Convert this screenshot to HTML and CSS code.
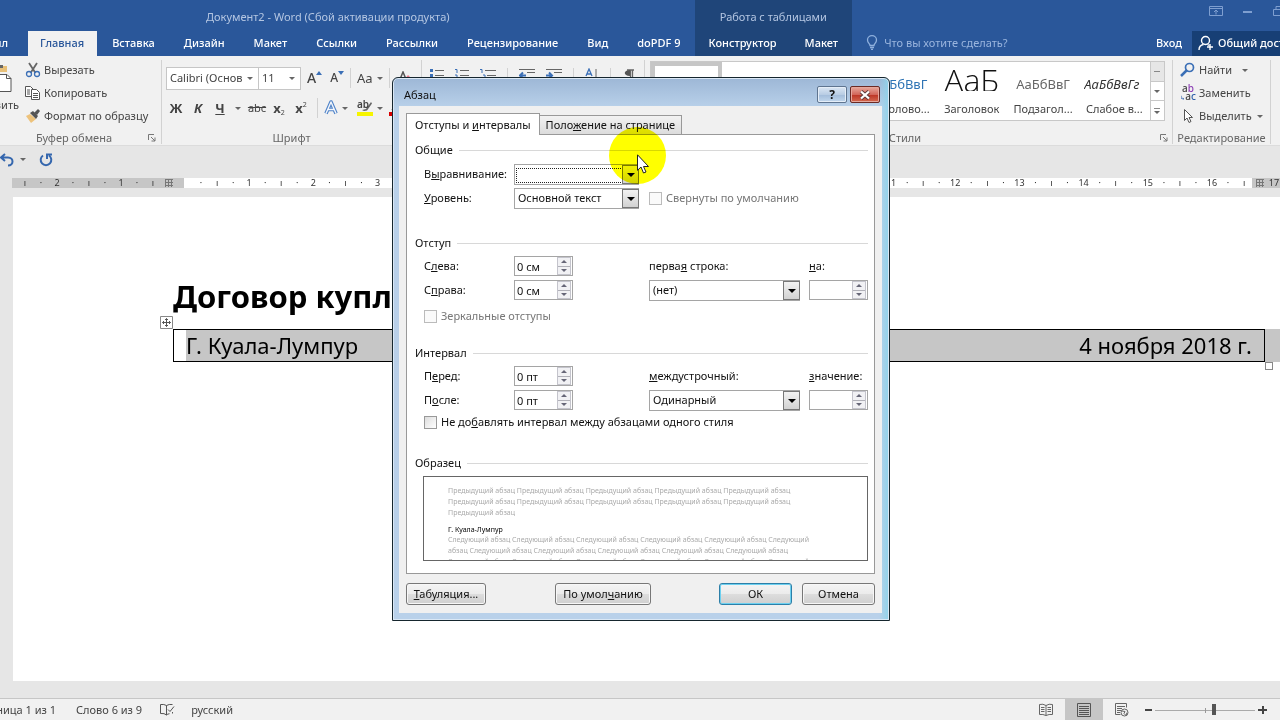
FILE: index.html
```html
<!DOCTYPE html>
<html lang="ru">
<head>
<meta charset="utf-8">
<title>Документ2 - Word</title>
<link rel="stylesheet" href="styles.css">
</head>
<body>
<div class="app">
  <header class="top">
    <div class="titlebar">
      <div class="doc-title">Документ2 - Word (Сбой активации продукта)</div>
      <div class="win-icons">
        <svg width="14" height="12" viewBox="0 0 14 12" fill="none" stroke="#7f9fd0"><path d="M.5 1.5h13v9H.5zM.5 3.5h13M7 9.500V5M5 7l2-2 2 2"/></svg>
        <svg width="10" height="12" viewBox="0 0 10 12" stroke="#7f9fd0" stroke-width="2"><path d="M0 7h9"/></svg>
        <svg width="10" height="12" viewBox="0 0 10 12" fill="none" stroke="#7f9fd0"><path d="M.5 4.500h7v6h-7zM3 4V1.500h7V8H8"/></svg>
      </div>
    </div>
    <nav class="tabs">
      <a class="tab file" href="#">Файл</a>
      <a class="tab active" href="#">Главная</a>
      <a class="tab" href="#">Вставка</a>
      <a class="tab" href="#">Дизайн</a>
      <a class="tab" href="#">Макет</a>
      <a class="tab" href="#">Ссылки</a>
      <a class="tab" href="#">Рассылки</a>
      <a class="tab" href="#">Рецензирование</a>
      <a class="tab" href="#">Вид</a>
      <a class="tab" href="#">doPDF 9</a>
      <div class="context">
        <span class="context-title">Работа с таблицами</span>
        <div class="context-tabs"><a class="tab" href="#">Конструктор</a><a class="tab" href="#">Макет</a></div>
      </div>
      <div class="tell">
        <svg width="12" height="15" viewBox="0 0 12 15" fill="none" stroke="#8fb0dd" stroke-width="1.300"><path d="M4 10.500C4 8.500 1.500 8 1.500 5a4.500 4.300 0 0 1 9 0c0 3-2.500 3.500-2.500 5.500zM4 12.500h4M5 14.300h2"/></svg>
        <span>Что вы хотите сделать?</span>
      </div>
      <a class="tab login" href="#">Вход</a>
      <a class="share" href="#">
        <svg width="16" height="16" viewBox="0 0 16 16" fill="none" stroke="#fff" stroke-width="1.400"><circle cx="7.500" cy="5.500" r="4"/><path d="M1 15c0-3.500 2-5 4.500-5.500M9.500 9.500l1.500 1M12 9v6M9 12h6"/></svg>
        <span>Общий доступ</span>
      </a>
    </nav>
  </header>

  <section class="ribbon">
    <div class="group clipboard">
      <div class="group-body">
        <div class="paste">
          <svg width="12" height="29" viewBox="0 0 12 29"><path d="M0 2h7v6H0z" fill="#e8c078"/><path d="M0 1h3v3H0z" fill="#666"/><path d="M-4 10.500H7l4 4v13H-4z" fill="#fff" stroke="#555"/><path d="M6.500 10.500v4H11" fill="none" stroke="#555"/></svg>
          <span>Вставить</span>
        </div>
        <div class="commands">
          <button class="cmd"><svg width="16" height="16" viewBox="0 0 16 16" fill="none"><path d="M4 1l6.500 10M12 1L5.500 11" stroke="#666" stroke-width="1.800"/><circle cx="4" cy="12" r="2.500" stroke="#3b6fb6" stroke-width="1.300"/><circle cx="12" cy="12" r="2.500" stroke="#3b6fb6" stroke-width="1.300"/></svg>Вырезать</button>
          <button class="cmd"><svg width="16" height="16" viewBox="0 0 16 16" fill="#fff" stroke="#555"><path d="M.5 1.500h5l3 3v7h-8z"/><path d="M2 5h3M2 7h3M2 9h3"/><path d="M6.500 4.500h5l3 3v7h-8z"/><path d="M8 8.500h5M8 10.500h5M8 12.500h5"/></svg>Копировать</button>
          <button class="cmd"><svg width="16" height="16" viewBox="0 0 16 16"><path d="M1 8l4-2 6 5-5 4z" fill="#edc27b"/><path d="M5 5l3-2 5 5-2 3z" fill="#555"/><path d="M9 5l4-4 2 2-3 4z" fill="#555"/></svg>Формат по образцу</button>
        </div>
      </div>
      <div class="group-name"><span>Буфер обмена</span><svg width="8" height="8" viewBox="0 0 8 8" fill="none" stroke="#777"><path d="M.5 6V.5H6M3 3l4 4M7 3.500V7H3.500"/></svg></div>
    </div>

    <div class="group font">
      <div class="group-body stack">
        <div class="line">
          <div class="combo name"><input type="text" value="Calibri (Основ" aria-label="Шрифт"><i class="caret"></i></div><div class="combo size"><input type="text" value="11" aria-label="Размер"><i class="caret"></i></div>
          <button class="tool grow"><b>A</b><svg width="6" height="4" viewBox="0 0 6 4"><path d="M0 4l3-4 3 4z" fill="#3b6fb6"/></svg></button>
          <button class="tool shrink"><b>A</b><svg width="6" height="4" viewBox="0 0 6 4"><path d="M0 0l3 4 3-4z" fill="#3b6fb6"/></svg></button>
          <i class="sep"></i>
          <button class="tool case">Aa<i class="caret"></i></button>
          <i class="sep"></i>
          <button class="tool" aria-label="Очистить формат"><svg width="16" height="14" viewBox="0 0 16 14"><path d="M2 13L7 1l5 12M4 8h6" fill="none" stroke="#555" stroke-width="1.500"/><path d="M8 9l4-5 4 4-4 5z" fill="#e77b8c"/></svg></button>
        </div>
        <div class="line second">
          <button class="tool glyph"><b>Ж</b></button>
          <button class="tool glyph"><b><em>К</em></b></button>
          <button class="tool glyph"><b><u>Ч</u></b></button>
          <i class="caret"></i>
          <button class="tool strike"><s>abc</s></button>
          <button class="tool glyph"><b>x</b><sub>2</sub></button>
          <button class="tool glyph"><b>x</b><sup>2</sup></button>
          <i class="sep"></i>
          <button class="tool" aria-label="Эффекты"><svg width="14" height="16" viewBox="0 0 14 16" fill="none" stroke-linejoin="round"><path d="M2 13.500L7 2l5 11.500M4 9.500h6" stroke="#4f83c8" stroke-width="3.600"/><path d="M2 13.500L7 2l5 11.500M4 9.500h6" stroke="#f3f6fb" stroke-width="1.400"/></svg></button>
          <i class="caret"></i>
          <button class="tool marker"><span>ab</span><svg width="16" height="16" viewBox="0 0 16 16"><path d="M14 2l-5 7-4 1 2 1 3-.5 5-7z" fill="#666"/><path d="M0 12h16v4H0z" fill="#f6f500"/></svg></button>
          <i class="caret"></i>
          <button class="tool ink" aria-label="Цвет текста"><svg width="16" height="16" viewBox="0 0 16 16"><path d="M3 10L8 0l5 10" fill="none" stroke="#555"/><path d="M0 12h16v4H0z" fill="#d80000"/></svg></button>
        </div>
      </div>
      <div class="group-name"><span>Шрифт</span></div>
    </div>

    <div class="group para">
      <div class="group-body">
        <svg width="14" height="14" viewBox="0 0 14 14"><path d="M5 2.500h9M5 7.500h9" stroke="#666"/><path d="M0 1h3v3H0zM0 6h3v3H0z" fill="#3b6fb6"/></svg>
        <svg width="14" height="14" viewBox="0 0 14 14"><path d="M5 2.500h9M5 7.500h9" stroke="#666"/><path d="M0 1.500h2V5M0 7h2v3" fill="none" stroke="#3b6fb6"/></svg>
        <svg class="wide" width="16" height="14" viewBox="0 0 16 14"><path d="M5 2.500h11M7 7.500h9" stroke="#666"/><path d="M0 1.500h2V5M3 7h2v3" fill="none" stroke="#3b6fb6"/></svg>
        <i class="sep"></i>
        <svg width="16" height="14" viewBox="0 0 16 14"><path d="M0 1.500h16M8 4.500h8M0 10.500h16" stroke="#666"/><path d="M7 7.500H1M4 4.500l-3 3 3 3" fill="none" stroke="#3b6fb6" stroke-width="2"/></svg>
        <svg width="16" height="14" viewBox="0 0 16 14"><path d="M0 1.500h16M8 4.500h8M0 10.500h16" stroke="#666"/><path d="M0 7.500h6M3 4.500l3 3-3 3" fill="none" stroke="#3b6fb6" stroke-width="2"/></svg>
        <i class="sep"></i>
        <svg width="14" height="14" viewBox="0 0 14 14" fill="none"><path d="M1 8l3-7 3 7M2 6h4" stroke="#3b6fb6" stroke-width="1.300"/><path d="M11 1v12" stroke="#666"/></svg>
        <i class="sep"></i>
        <svg width="14" height="14" viewBox="0 0 14 14"><path d="M5 2h7M8.500 2v11M10.500 2v11" stroke="#666" stroke-width="1.300"/><path d="M8 2v6C1 8 1 2 8 2z" fill="#555"/></svg>
      </div>
    </div>

    <div class="group styles">
      <div class="group-body">
        <div class="gallery">
          <button class="style selected"></button>
          <button class="style"></button>
          <button class="style"></button>
          <button class="style"><span class="sample blue">АаБбВвГ</span><span>Заголово...</span></button>
          <button class="style"><span class="sample huge">АаБ</span><span>Заголовок</span></button>
          <button class="style"><span class="sample gray">АаБбВвГ</span><span>Подзагол...</span></button>
          <button class="style"><span class="sample slant">АаБбВвГг</span><span>Слабое в...</span></button>
          <div class="gallery-scroll">
            <button class="off" aria-label="Вверх"><i class="dash"></i></button>
            <button aria-label="Вниз"><i class="caret"></i></button>
            <button aria-label="Все стили"><i class="dash"></i><i class="caret"></i></button>
          </div>
        </div>
      </div>
      <div class="group-name"><span>Стили</span><svg width="8" height="8" viewBox="0 0 8 8" fill="none" stroke="#777"><path d="M.5 6V.5H6M3 3l4 4M7 3.500V7H3.500"/></svg></div>
    </div>

    <div class="group editing">
      <div class="group-body">
        <div class="commands">
          <button class="cmd"><svg width="16" height="16" viewBox="0 0 16 16" fill="none" stroke="#3b6fb6"><circle cx="9.500" cy="5.500" r="4" stroke-width="1.700"/><path d="M6.500 8.500L1 14" stroke-width="2.500"/></svg>Найти<i class="caret far"></i></button>
          <button class="cmd"><span class="swap"><span>a<strong>b</strong></span><span><small>↳</small>a<em>c</em></span></span>Заменить</button>
          <button class="cmd"><svg width="16" height="16" viewBox="0 0 16 16" fill="#fff" stroke="#555"><path d="M4.500 1.500v11l2.500-2.500 2 4.500 2-1-2-4h3.500z"/></svg>Выделить<i class="caret"></i></button>
        </div>
      </div>
      <div class="group-name"><span>Редактирование</span></div>
    </div>
  </section>

  <div class="quick">
    <svg width="14" height="14" viewBox="0 0 14 14" fill="none" stroke="#3567ae" stroke-width="2"><path d="M5 1L1 4.500 5 8M1 4.500h7c6 0 6 8 0 8"/></svg>
    <i class="caret"></i>
    <svg class="redo" width="14" height="14" viewBox="0 0 14 14" fill="none" stroke="#3567ae" stroke-width="2"><path d="M4 2.500a5.300 5.300 0 1 0 6 0M8 6V1.500h5"/></svg>
  </div>

  <div class="ruler">
    <div class="ruler-part left"><i>ı</i><i>·</i><i>2</i><i>·</i><i>ı</i><i>·</i><i>1</i><i>·</i><i>ı</i><i class="grid-mark"></i></div>
    <div class="ruler-part mid"><i>·</i><i>ı</i><i>·</i><i>1</i><i>·</i><i>ı</i><i>·</i><i>2</i><i>·</i><i>ı</i><i>·</i><i>3</i><i>·</i><i>ı</i><i>·</i><i>4</i><i>·</i><i>ı</i><i>·</i><i>5</i><i>·</i><i>ı</i><i>·</i><i>6</i><i>·</i><i>ı</i><i>·</i><i>7</i><i>·</i><i>ı</i><i>·</i><i>8</i><i>·</i><i>ı</i><i>·</i><i>9</i><i>·</i><i>ı</i><i>·</i><i>10</i><i>·</i><i>ı</i><i>·</i><i>11</i><i>·</i><i>ı</i><i>·</i><i>12</i><i>·</i><i>ı</i><i>·</i><i>13</i><i>·</i><i>ı</i><i>·</i><i>14</i><i>·</i><i>ı</i><i>·</i><i>15</i><i>·</i><i>ı</i><i>·</i><i>16</i><i>·</i><i>ı</i></div>
    <div class="ruler-part right"><i class="grid-mark"></i><i>17</i></div>
  </div>

  <main class="page">
    <h1>Договор купли-продажи</h1>
    <div class="table-wrap">
      <svg class="move" width="13" height="13" viewBox="0 0 13 13" fill="#fff" stroke="#888"><path d="M.5.5h12v12H.5z"/><path d="M6.500 2.500v8M2.500 6.500h8M5 4l1.500-1.500L8 4M5 9l1.500 1.500L8 9M4 5L2.500 6.500 4 8M9 5l1.500 1.500L9 8" fill="none" stroke="#555"/></svg>
      <table>
        <tr><td class="city"><div>Г. Куала-Лумпур</div></td><td class="date">4 ноября 2018 г.</td></tr>
      </table>
      <div class="row-end"></div>
      <i class="resize"></i>
    </div>
  </main>

  <footer class="status">
    <span class="pages">Страница 1 из 1</span>
    <span class="words">Слово 6 из 9</span>
    <svg width="15" height="14" viewBox="0 0 15 14" fill="none" stroke="#555"><path d="M6.500 2.500Q4 1 .5 1.500v9q4-.5 6 1.500V2.500Q9 1 12.500 1.500M6.500 12q1-1 3-1.300M12.500 9v1.500M8 6.500l2 2 4-5" /></svg>
    <span class="lang">русский</span>
    <div class="views">
      <button aria-label="Режим чтения"><svg width="14" height="14" viewBox="0 0 14 14" fill="none" stroke="#666"><path d="M7 2.500Q4 .5.500 1.500v10q3.500-.5 6.500 1 3-1.500 6.500-1v-10Q10 .5 7 2.500v10M2 4.500h3.500M2 6.500h3.500M2 8.500h3.500M8.500 4.500H12M8.500 6.500H12M8.500 8.500H12"/></svg></button>
      <button class="on" aria-label="Разметка страницы"><svg width="14" height="14" viewBox="0 0 14 14" fill="none" stroke="#555"><path d="M.5.500h13v13H.5zM2 3.500h10M2 5.500h10M2 7.500h10M2 9.500h10M2 11.500h10"/></svg></button>
      <button aria-label="Веб-документ"><svg width="14" height="14" viewBox="0 0 14 14" fill="none" stroke="#666"><path d="M5.500 11.500h-5v-11h11v4M2 3.500h8M2 5.500h5M2 7.500h4M2 9.500h3"/><circle cx="9.500" cy="9.500" r="3.500"/><path d="M7 8l3 .5-1 2 2 2 1-3"/></svg></button>
    </div>
    <div class="zoom">
      <button aria-label="Уменьшить"><svg width="7" height="9" viewBox="0 0 7 9"><path d="M0 4h7v2H0z" fill="#444"/></svg></button>
      <input type="range" min="0" max="100" value="59" aria-label="Масштаб">
      <button aria-label="Увеличить"><svg width="9" height="9" viewBox="0 0 9 9"><path d="M0 4h9v2H0zM4 1h2v8H4z" fill="#444"/></svg></button>
    </div>
  </footer>
</div>

<div class="dialog" role="dialog" aria-labelledby="dlg-title">
  <div class="dlg-title"><span id="dlg-title">Абзац</span>
    <div class="dlg-ctl">
      <button class="help" aria-label="Справка">?</button>
      <button class="close" aria-label="Закрыть"><svg width="12" height="10" viewBox="0 0 12 10"><path d="M2 1.500l8 7M10 1.500l-8 7" stroke="#5a3a3a" stroke-width="4"/><path d="M2 1.500l8 7M10 1.500l-8 7" stroke="#fff" stroke-width="2.300"/></svg></button>
    </div>
  </div>
  <form class="dlg-body">
    <div class="dlg-tabs"><button type="button" class="dlg-tab on">Отступы и <u>и</u>нтервалы</button><button type="button" class="dlg-tab">Поло<u>ж</u>ение на странице</button></div>
    <div class="panel">
      <section class="general">
        <h2>Общие</h2>
        <div class="fields">
          <label for="align">В<u>ы</u>равнивание:</label>
          <div class="drop short focus"><select id="align"><option></option></select><i></i></div>
          <span></span><span></span>
          <label for="level"><u>У</u>ровень:</label>
          <div class="drop short"><select id="level"><option>Основной текст</option></select><i></i></div>
          <label class="check off span2"><input type="checkbox" disabled>Свернуты по умолчанию</label>
        </div>
      </section>
      <section class="indent">
        <h2>Отступ</h2>
        <div class="fields">
          <label for="left">С<u>л</u>ева:</label>
          <div class="spin"><input id="left" type="text" value="0 см"><i></i></div>
          <label for="first">перва<u>я</u> строка:</label>
          <label for="by"><u>н</u>а:</label>
          <label for="right">С<u>п</u>рава:</label>
          <div class="spin"><input id="right" type="text" value="0 см"><i></i></div>
          <div class="drop long"><select id="first"><option>(нет)</option></select><i></i></div>
          <div class="spin"><input id="by" type="text" value=""><i></i></div>
          <label class="check off span4 low"><input type="checkbox" disabled>Зеркальные отступы</label>
        </div>
      </section>
      <section class="spacing">
        <h2>Интервал</h2>
        <div class="fields">
          <label for="before">П<u>е</u>ред:</label>
          <div class="spin"><input id="before" type="text" value="0 пт"><i></i></div>
          <label for="line"><u>м</u>еждустрочный:</label>
          <label for="val"><u>з</u>начение:</label>
          <label for="after">П<u>о</u>сле:</label>
          <div class="spin"><input id="after" type="text" value="0 пт"><i></i></div>
          <div class="drop long"><select id="line"><option>Одинарный</option></select><i></i></div>
          <div class="spin"><input id="val" type="text" value=""><i></i></div>
          <label class="check span4 snug"><input type="checkbox"><span>Не до<u>б</u>авлять интервал между абзацами одного стиля</span></label>
        </div>
      </section>
      <section>
        <h2>Образец</h2>
        <div class="preview">
          <p>Предыдущий абзац Предыдущий абзац Предыдущий абзац Предыдущий абзац Предыдущий абзац<br>Предыдущий абзац Предыдущий абзац Предыдущий абзац Предыдущий абзац Предыдущий абзац<br>Предыдущий абзац</p>
          <p class="current">Г. Куала-Лумпур</p>
          <p>Следующий абзац Следующий абзац Следующий абзац Следующий абзац Следующий абзац Следующий<br>абзац Следующий абзац Следующий абзац Следующий абзац Следующий абзац Следующий абзац<br>Следующий абзац Следующий абзац Следующий абзац Следующий абзац Следующий абзац Следующий</p>
        </div>
      </section>
    </div>
    <div class="dlg-buttons">
      <button type="button" class="btn tabs-btn"><u>Т</u>абуляция...</button>
      <button type="button" class="btn default-btn">По умол<u>ч</u>анию</button>
      <button type="button" class="btn ok">ОК</button>
      <button type="button" class="btn cancel">Отмена</button>
    </div>
  </form>
  <i class="spot"></i>
  <svg class="pointer" width="12" height="20" viewBox="0 0 12 20"><path d="M.5.800v15.500l3.500-3.300 2.500 6 2.500-1-2.500-5.500h5z" fill="#fff" stroke="#222"/></svg>
</div>
</body>
</html>
```

FILE: styles.css
```css
* { box-sizing: border-box; }
body { margin: 0; font-family: "Noto Sans", "Open Sans", sans-serif; font-size: 11px; line-height: 16px; color: #444; overflow: hidden; }
button, input, select { font: inherit; color: inherit; }
button { border: 0; padding: 0; background: none; }
a { color: inherit; text-decoration: none; }
svg { display: block; flex: none; }
i { font-style: normal; }
.app { display: flex; flex-direction: column; height: 100vh; background: #e6e6e6; white-space: nowrap; }

.top { background: #2a579a; color: #fff; }
.titlebar { display: flex; justify-content: space-between; height: 31px; }
.doc-title { padding: 9px 0 0 206px; color: #b4c6e2; }
.win-icons { display: flex; gap: 20px; width: 71px; padding-top: 5px; }
.tabs { display: flex; height: 25px; }
.tab { padding: 4px 14px 0 15px; font-weight: 500; }
.file { margin-left: -36px; width: 64px; padding-right: 20px; text-align: right; }
.active { background: #f1f1f1; color: #2a579a; padding: 4px 13px 0 12px; }
.context { display: flex; flex-direction: column; margin: -31px 0 0 0; background: #1f4579; }
.context-title { height: 31px; padding-top: 9px; text-align: center; color: #b4c6e2; }
.context-tabs { display: flex; }
.context-tabs .tab { padding-left: 14px; }
.tell { display: flex; gap: 6px; flex: 1; padding: 4px 0 0 14px; color: #9ab5de; }
.login { padding-right: 10px; }
.share { display: flex; gap: 4px; width: 88px; padding: 4px 0 0 6px; overflow: hidden; background: #173f75; font-weight: 500; }

.ribbon { display: flex; height: 90px; background: #f1f1f1; border-bottom: 1px solid #dcdcdc; }
.group { display: flex; flex-direction: column; justify-content: space-between; flex: none; margin: 4px 0 1px; border-right: 1px solid #d2d2d2; }
.group-body { display: flex; }
.group-name { display: flex; justify-content: center; align-items: center; color: #666; height: 12px; padding: 0 5px; }
.group-name span { flex: 1; text-align: center; }
.caret { display: inline-block; width: 0; border: 3px solid transparent; border-top-color: #666; border-bottom: 0; }
.sep { width: 1px; height: 20px; background: #d2d2d2; }
.clipboard { width: 162px; }
.clipboard .group-name { padding-left: 0; }
.paste { width: 24px; padding-top: 4px; }
.paste span { display: block; margin: 4px 0 0 -32px; width: 51px; text-align: right; }
.commands { display: flex; flex-direction: column; }
.cmd { display: flex; align-items: center; gap: 3px; height: 23px; padding: 0 0 3px 1px; line-height: 20px; }
.cmd .caret { margin-left: 2px; }
.cmd .far { margin-left: 7px; }

.font { width: 260px; }
.stack { flex-direction: column; }
.line { display: flex; align-items: center; padding: 6px 0 0 4px; height: 30px; }
.combo { display: flex; align-items: center; height: 23px; border: 1px solid #c6c6c6; background: #fff; padding-right: 5px; }
.combo input { border: 0; padding: 0 0 0 3px; width: 100%; min-width: 0; background: none; }
.combo.name { width: 93px; }
.combo.size { width: 42px; border-left: 0; }
.tool { display: flex; align-items: center; justify-content: center; }
.grow { margin-left: 6px; font-size: 14px; }
.grow svg, .shrink svg { margin-bottom: 10px; }
.grow b, .shrink b { font-weight: 500; }
.shrink { margin-left: 8px; font-size: 12px; }
.font .line .sep { margin: 0 6px; }
.case { font-size: 13px; gap: 4px; }
.second { padding-left: 3px; font-size: 13px; }
.glyph { width: 22px; }
.glyph sub, .glyph sup { font-size: 7px; line-height: 7px; }
.glyph sub { margin-top: 8px; }
.glyph sup { margin-bottom: 8px; }
.strike { width: 20px; margin: 0 1px 0 6px; font-size: 11px; }
.second .caret { margin-left: 4px; }
.font .second .sep { margin: 0 6px 0 5px; }
.ink { margin-left: 6px; }
.marker { position: relative; margin-left: 9px; }
.marker span { position: absolute; left: 0; top: -4px; font-size: 10px; font-weight: 600; }

.para { width: 223px; }
.para .group-body { padding: 8px 8px 0; justify-content: space-between; }
.styles { flex: 1 1 0; min-width: 0; }
.styles .group-body { padding: 1px 7px 0 5px; }
.styles .group-name { padding-right: 4px; }
.gallery { display: grid; grid-template-columns: repeat(7, minmax(0, 1fr)) 14px; flex: 1; height: 60px; border: 1px solid #c8c8c8; background: #fff; }
.style { display: flex; flex-direction: column; align-items: center; justify-content: space-between; padding: 7px 0 3px; overflow: hidden; white-space: nowrap; }
.selected { border: 4px solid #c6c6c6; }
.sample { display: flex; align-items: center; justify-content: center; height: 22px; font-size: 13px; overflow: hidden; width: 60px; padding-top: 7px; }
.blue { color: #2e74b5; }
.huge { font-family: "Open Sans", "Noto Sans", sans-serif; font-size: 32px; font-weight: 300; color: #111; padding-top: 0; }
.gray { color: #666; }
.slant { font-style: italic; color: #333; justify-content: flex-start; }
.gallery-scroll { display: flex; flex-direction: column; border-left: 1px solid #c8c8c8; }
.gallery-scroll button { flex: 1; display: flex; flex-direction: column; gap: 2px; align-items: center; justify-content: center; border-bottom: 1px solid #c8c8c8; }
.gallery-scroll button:last-child { border-bottom: 0; }
.gallery-scroll .off { background: #e6e6e6; }
.dash { width: 6px; height: 1px; background: #888; }
.editing { width: 98px; margin-right: 9px; }
.editing .cmd { padding-left: 7px; }
.editing .group-name { padding: 0; }
.swap { width: 16px; font-size: 10px; line-height: 8px; font-weight: 500; }
.swap > span { display: block; }
.swap em { font-style: normal; color: #2e5fa8; }
.swap strong { color: #8c3fb5; font-weight: 500; }
.swap small { font-size: 6px; color: #2e5fa8; }

.quick { display: flex; align-items: center; height: 32px; padding-bottom: 5px; gap: 6px; }
.redo { margin-left: 7px; }
.ruler { display: flex; height: 10px; margin: 0 0 9px 12px; font-size: 9px; line-height: 10px; color: #333; }
.ruler-part { display: flex; }
.ruler-part i { flex: 1 1 0; width: 0; display: flex; justify-content: center; }
.left { width: 172px; padding: 0 7px 0 5px; background: #c6c6c6; }
.mid { flex: 1; padding-left: 9px; background: #fff; }
.right { width: 28px; background: #c6c6c6; }
.ruler-part .grid-mark { flex: none; width: 8px; height: 8px; margin: 1px 4px; background: repeating-linear-gradient(90deg, #777 0 1px, transparent 1px 3px), repeating-linear-gradient(#777 0 1px, transparent 1px 3px); }

.page { flex: 1; margin: 0 0 17px 13px; padding: 79px 0 0 160px; background: #fff; color: #000; }
h1 { margin: 0; height: 40px; line-height: 40px; font-size: 31px; font-weight: 700; }
.table-wrap { position: relative; display: flex; margin-top: 13px; font-size: 22px; line-height: 31px; }
table { flex: 1; border-collapse: collapse; border: 1px solid #000; }
td { padding: 0; }
.city div { margin-left: 12px; background: #c6c6c6; }
.date { text-align: right; padding-right: 12px; background: #c6c6c6; }
.row-end { width: 15px; background: #c6c6c6; }
.move { position: absolute; left: -13px; top: -13px; }
.resize { position: absolute; right: 7px; top: 33px; width: 8px; height: 8px; border: 1px solid #888; background: #fff; }

.status { display: flex; align-items: center; height: 22px; background: #f1f1f1; border-top: 1px solid #c6c6c6; }
.pages { width: 91px; margin-left: -35px; text-align: right; }
.words { margin: 0 18px 0 20px; }
.lang { margin-left: 16px; flex: 1; }
.views { display: flex; align-self: stretch; }
.views button { display: flex; align-items: center; justify-content: center; width: 38px; }
.views .on { background: #c6c6c6; }
.zoom { display: flex; align-items: center; gap: 3px; margin: 0 13px 0 4px; }
.zoom input { appearance: none; width: 100px; height: 12px; margin: 0; background: linear-gradient(#999, #999) 50px 4px / 1px 5px no-repeat, linear-gradient(#aaa, #aaa) 0 6px / 100% 1px no-repeat; }
.zoom input::-webkit-slider-thumb { appearance: none; width: 4px; height: 11px; background: #555; }

.dialog { position: absolute; left: 392px; top: 77px; width: 498px; padding: 0 7px 7px 6px; border: 1px solid #16262e; border-radius: 6px 6px 0 0; background: linear-gradient(90deg, transparent 98%, #8fd3ea), linear-gradient(#9db7d6, #b9d1ea 30px, #b9cfe8 60%, #b9d1ea); box-shadow: inset 0 0 0 1px #dbe8f5; color: #111; white-space: nowrap; }
.dlg-title { display: flex; justify-content: space-between; height: 28px; padding: 8px 2px 0 5px; line-height: 18px; }
.dlg-ctl { display: flex; gap: 3px; }
.dlg-ctl button { display: flex; align-items: center; justify-content: center; width: 30px; height: 17px; border: 1px solid #5f7590; border-radius: 2px; background: linear-gradient(#dbe7f4, #b9cde4 50%, #a2bcda 51%, #c2d7ed); box-shadow: inset 0 0 0 1px #e5eef8; font-weight: 700; font-size: 12px; }
.dlg-ctl .close { border-color: #6b2a24; background: linear-gradient(#e8a99d, #d2675a 50%, #bb3323 51%, #d46a50); box-shadow: inset 0 0 0 1px #e5a79c; }
.dlg-body { padding: 7px 7px 8px; background: #f0f0f0; }
.dlg-tabs { display: flex; align-items: flex-end; height: 21px; }
.dlg-tab { height: 19px; padding: 0 6px; border: 1px solid #999; border-bottom: 0; border-left: 0; background: linear-gradient(#f2f2f2, #dcdcdc); }
.dlg-tab.on { height: 22px; margin-bottom: -1px; padding: 0 8px; border-left: 1px solid #999; background: #fff; position: relative; z-index: 1; }
.panel { padding: 6px 6px 12px 8px; border: 1px solid #999; background: #fff; }
h2 { display: flex; align-items: center; gap: 6px; margin: 0; height: 18px; font-size: 11px; font-weight: 400; }
h2::after { content: ""; flex: 1; height: 1px; background: #d8d8d8; }
.fields { display: grid; grid-template-columns: 90px 135px 160px 1fr; grid-auto-rows: 24px; align-items: center; padding: 2px 0 0 9px; }
.general { margin-bottom: 24px; }
.general .fields { padding-top: 3px; }
.indent, .spacing { margin-bottom: 18px; }
.span2 { grid-column: span 2; }
.span4 { grid-column: span 4; }
.check { display: flex; align-items: center; gap: 4px; height: 20px; }
.low { padding-top: 4px; }
.snug { align-self: start; }
.off { color: #777; }
.check input { appearance: none; width: 13px; height: 13px; margin: 0; border: 1px solid #999; background: linear-gradient(135deg, #ddd, #fff); }
.check.off input { border-color: #bbb; background: #fafafa; }
.drop { position: relative; height: 21px; }
.short { width: 125px; }
.long { width: 151px; }
.drop select { appearance: none; display: block; width: 100%; height: 21px; padding: 0 20px 0 3px; border: 1px solid #a5a5a5; border-radius: 0; background: #fff; }
.drop i { position: absolute; right: 0; top: 1px; width: 17px; height: 19px; border: 1px solid #777; background: linear-gradient(#f2f2f2, #d2d2d2); pointer-events: none; }
.drop i::after { content: ""; position: absolute; left: 4px; top: 7px; border: 4px solid transparent; border-top-color: #000; border-bottom: 0; }
.focus::before { content: ""; position: absolute; left: 2px; top: 4px; width: 105px; height: 13px; border: 1px dotted #222; }
.spin { position: relative; width: 59px; height: 20px; }
.spin input { width: 100%; height: 20px; padding: 0 18px 0 2px; border: 1px solid #a5a5a5; display: block; }
.spin i { position: absolute; right: 2px; top: 1px; width: 14px; height: 18px; border: 1px solid #c4c4cc; background: linear-gradient(#f1f1f4 8px, #b0b0b8 8px 9px, #f1f1f4 9px); }
.spin i::before, .spin i::after { content: ""; position: absolute; left: 3px; border: 3px solid transparent; }
.spin i::before { top: 2px; border-bottom-color: #667; border-top: 0; }
.spin i::after { bottom: 2px; border-top-color: #667; border-bottom: 0; }
.preview { height: 85px; margin: 4px 0 0 8px; padding: 8px 24px 0; border: 1px solid #666; overflow: hidden; font-size: 7px; line-height: 11px; color: #aaa; }
.preview p { margin: 0; }
.preview .current { color: #000; margin-top: 6px; height: 10px; }
.dlg-buttons { display: flex; padding-top: 9px; }
.btn { height: 22px; border: 1px solid #777; border-radius: 3px; background: linear-gradient(#f4f4f4, #ebebeb 50%, #dddddd 51%, #cfcfcf); box-shadow: inset 0 0 0 1px #f7f7f7; }
.tabs-btn { width: 80px; }
.default-btn { width: 96px; margin-left: 69px; }
.ok { width: 73px; margin-left: auto; border-color: #2c7fa8; box-shadow: inset 0 0 0 1px #6cd0f0; }
.cancel { width: 73px; margin-left: 10px; }
.spot { position: absolute; left: 216px; top: 49px; width: 57px; height: 57px; border-radius: 50%; background: #ffff00; mix-blend-mode: multiply; z-index: 2; }
.pointer { position: absolute; left: 244px; top: 76px; z-index: 3; }
```
